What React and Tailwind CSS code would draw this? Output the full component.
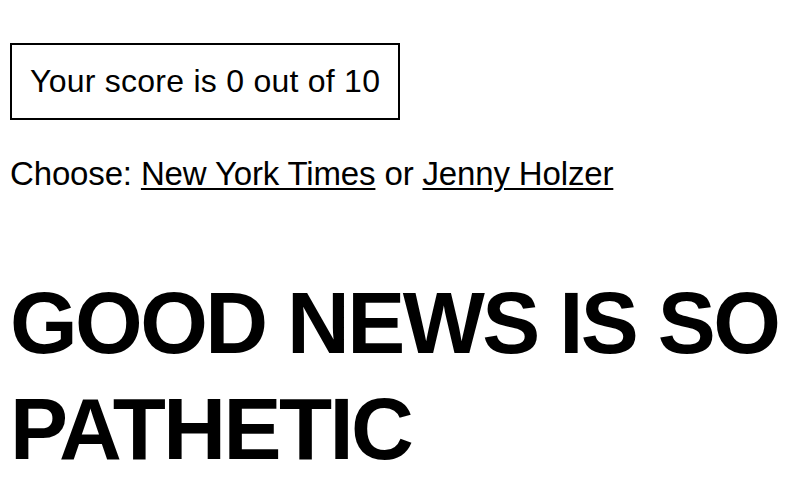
import React from 'react';

const App = () => {
  return (
    <div className="min-h-[500px] bg-white text-black px-[10px] pt-[43px] font-['Liberation_Sans',Arial,sans-serif]">
      <div className="inline-block border-2 border-black px-[18px] h-[77px] leading-[73px] text-[32px] tracking-[0.25px]">
        Your score is 0 out of 10
      </div>

      <p className="mt-[34px] text-[33px] leading-[40px] tracking-[-0.15px]">
        Choose:{' '}
        <a href="#" className="underline decoration-2 underline-offset-[3px]">New York Times</a>
        {' '}or{' '}
        <a href="#" className="underline decoration-2 underline-offset-[3px]">Jenny Holzer</a>
      </p>

      <h1 className="mt-[76px] text-[87px] leading-[106px] font-bold tracking-[-2.6px] uppercase">
        Good news is so pathetic
      </h1>
    </div>
  );
};

export default App;
